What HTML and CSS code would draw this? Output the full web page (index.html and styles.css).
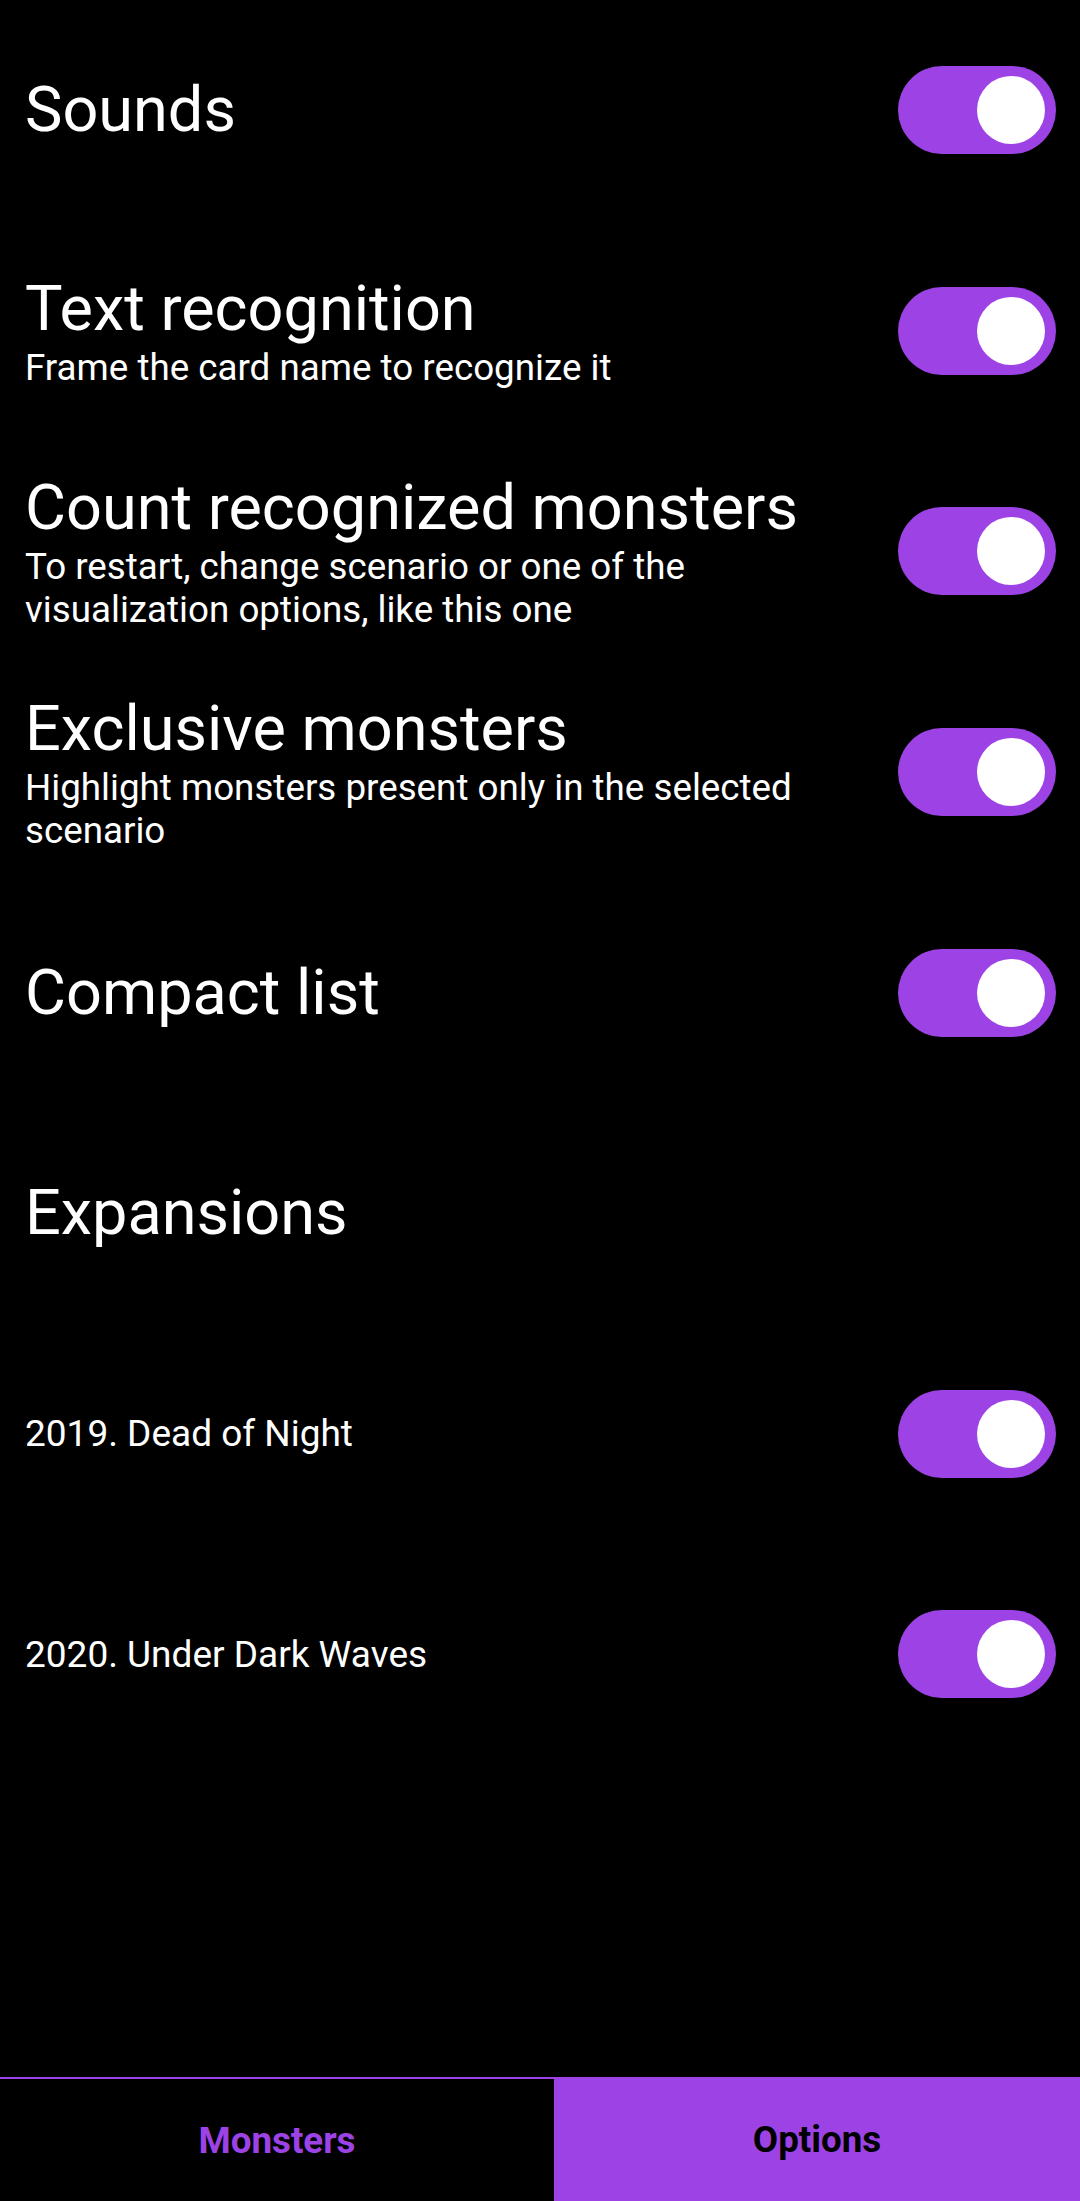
FILE: index.html
```html
<!DOCTYPE html>
<html lang="en">
<head>
<meta charset="utf-8">
<title>Options</title>
<link rel="stylesheet" href="styles.css">
</head>
<body>
<div class="app">
  <main class="settings">
    <div class="row">
      <div class="text"><div class="title">Sounds</div></div>
      <div class="switch on"><span class="thumb"></span></div>
    </div>
    <div class="row">
      <div class="text">
        <div class="title">Text recognition</div>
        <div class="sub">Frame the card name to recognize it</div>
      </div>
      <div class="switch on"><span class="thumb"></span></div>
    </div>
    <div class="row">
      <div class="text">
        <div class="title">Count recognized monsters</div>
        <div class="sub">To restart, change scenario or one of the visualization options, like this one</div>
      </div>
      <div class="switch on"><span class="thumb"></span></div>
    </div>
    <div class="row">
      <div class="text">
        <div class="title">Exclusive monsters</div>
        <div class="sub">Highlight monsters present only in the selected scenario</div>
      </div>
      <div class="switch on"><span class="thumb"></span></div>
    </div>
    <div class="row">
      <div class="text"><div class="title">Compact list</div></div>
      <div class="switch on"><span class="thumb"></span></div>
    </div>
    <div class="row">
      <div class="text"><div class="title">Expansions</div></div>
    </div>
    <div class="row">
      <div class="text"><div class="item">2019. Dead of Night</div></div>
      <div class="switch on"><span class="thumb"></span></div>
    </div>
    <div class="row">
      <div class="text"><div class="item">2020. Under Dark Waves</div></div>
      <div class="switch on"><span class="thumb"></span></div>
    </div>
  </main>
  <nav class="tabs">
    <div class="tab">Monsters</div>
    <div class="tab active">Options</div>
  </nav>
</div>
</body>
</html>
```
FILE: styles.css
```css
html, body {
  margin: 0;
  padding: 0;
  background: #000;
}
body {
  font-family: Roboto, "Noto Sans", "Liberation Sans", sans-serif;
  color: #fff;
}
.app {
  height: 100vh;
  display: flex;
  flex-direction: column;
}
.settings {
  flex: 1;
  display: flex;
  flex-direction: column;
}
.row {
  height: 220.6px;
  display: flex;
  align-items: center;
  justify-content: space-between;
  gap: 20px;
  padding: 0 24px 0 25px;
  box-sizing: border-box;
}
.text {
  flex: 1;
  min-width: 0;
}
.title {
  font-size: 63px;
  line-height: 74px;
}
.sub {
  font-size: 36.75px;
  line-height: 43px;
}
.item {
  font-size: 37px;
  line-height: 43px;
}
.switch {
  flex: none;
  width: 158px;
  height: 88px;
  border-radius: 44px;
  background: #9d43e6;
  display: flex;
  align-items: center;
  justify-content: flex-end;
  padding-right: 11px;
  box-sizing: border-box;
}
.thumb {
  width: 68px;
  height: 68px;
  border-radius: 50%;
  background: #fff;
}
.tabs {
  flex: none;
  height: 124px;
  display: flex;
  border-top: 2px solid #9d43e6;
  box-sizing: border-box;
}
.tab {
  display: flex;
  align-items: center;
  justify-content: center;
  font-size: 36.75px;
  font-weight: 700;
  color: #9d43e6;
  width: 554px;
}
.tab.active {
  flex: 1;
  width: auto;
  background: #9d43e6;
  color: #000;
  margin-top: -2px;
}
```
